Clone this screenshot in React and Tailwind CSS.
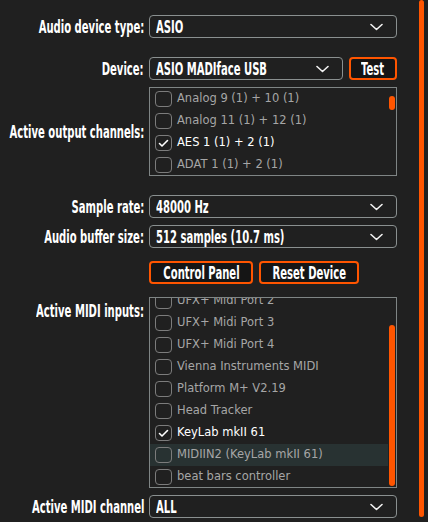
import { useState } from "react";

const LABEL_FONT = "font-['DejaVu_Sans_Condensed','DejaVu_Sans',sans-serif]";
const ITEM_FONT = "font-['DejaVu_Sans','Verdana',sans-serif]";

const outputChannels = [
  { name: "Analog 9 (1) + 10 (1)", on: false },
  { name: "Analog 11 (1) + 12 (1)", on: false },
  { name: "AES 1 (1) + 2 (1)", on: true },
  { name: "ADAT 1 (1) + 2 (1)", on: false },
];

const midiInputs = [
  { name: "UFX+ Midi Port 2", on: false },
  { name: "UFX+ Midi Port 3", on: false },
  { name: "UFX+ Midi Port 4", on: false },
  { name: "Vienna Instruments MIDI", on: false },
  { name: "Platform M+ V2.19", on: false },
  { name: "Head Tracker", on: false },
  { name: "KeyLab mkII 61", on: true },
  { name: "MIDIIN2 (KeyLab mkII 61)", on: false, hover: true },
  { name: "beat bars controller", on: false },
];

function Chevron() {
  return (
    <svg className="shrink-0" width="13" height="8" viewBox="0 0 13 8" fill="none">
      <path d="M1 1.5 L6.5 6.5 L12 1.5" stroke="#f2f2f2" strokeWidth="1.6" strokeLinecap="round" strokeLinejoin="round" />
    </svg>
  );
}

// narrow bold text, squeezed horizontally from one side
function Narrow({ children, origin = "origin-left" }) {
  return (
    <span className={`inline-block whitespace-nowrap text-white font-bold text-[18px] leading-none scale-x-[0.62] ${origin} ${LABEL_FONT}`}>
      {children}
    </span>
  );
}

function Label({ children, className = "" }) {
  return (
    <div className={`w-[149px] shrink-0 pr-[5px] flex justify-end ${className}`}>
      <Narrow origin="origin-right">{children}</Narrow>
    </div>
  );
}

function Combo({ value, className = "" }) {
  return (
    <div className={`h-[23px] flex items-center justify-between border border-[#8a9090] rounded-[4px] pl-[6px] pr-[13px] ${className}`}>
      <div className="min-w-0 flex-1 overflow-visible">
        <Narrow>{value}</Narrow>
      </div>
      <Chevron />
    </div>
  );
}

function OrangeButton({ children, className = "" }) {
  return (
    <button className={`h-[23px] flex items-center justify-center bg-[#151515] border-2 border-[#ff5500] rounded-[4px] ${className}`}>
      <Narrow origin="origin-center">{children}</Narrow>
    </button>
  );
}

function CheckRow({ item }) {
  return (
    <div className={`h-[22px] flex items-center pl-[5px] ${item.hover ? "bg-[#283232]" : ""}`}>
      <div className="w-[17px] h-[16px] shrink-0 border border-[#7c7c7c] rounded-[4px] flex items-center justify-center">
        {item.on && (
          <svg width="11" height="9" viewBox="0 0 11 9" fill="none">
            <path d="M1.5 4.5 L4 7 L9.5 1.5" stroke="#ffffff" strokeWidth="1.6" strokeLinecap="round" strokeLinejoin="round" />
          </svg>
        )}
      </div>
      <span className={`ml-[5px] whitespace-nowrap text-[11.5px] ${ITEM_FONT} ${item.on ? "text-white" : "text-[#a6a6a6]"}`}>
        {item.name}
      </span>
    </div>
  );
}

export default function App() {
  const [channel] = useState("ALL");

  return (
    <div className="w-[428px] h-[522px] bg-[#202020] flex overflow-hidden">
      <div className="w-[397px] pt-[15px] flex flex-col">
        <div className="flex items-center">
          <Label>Audio device type:</Label>
          <Combo value="ASIO" className="flex-1" />
        </div>

        <div className="flex items-center mt-[19px]">
          <Label>Device:</Label>
          <Combo value="ASIO MADIface USB" className="w-[194px]" />
          <OrangeButton className="ml-[6px] flex-1">Test</OrangeButton>
        </div>

        <div className="flex items-center mt-[7px]">
          <Label>Active output channels:</Label>
          <div className="flex-1 h-[89px] border border-[#7f8585] relative overflow-hidden">
            <div className="flex flex-col pr-[8px]">
              {outputChannels.map((c) => (
                <CheckRow key={c.name} item={c} />
              ))}
            </div>
            <div className="absolute right-[1px] top-[8px] w-[6px] h-[14px] rounded-full bg-[#ff5500]" />
          </div>
        </div>

        <div className="flex items-center mt-[19px]">
          <Label>Sample rate:</Label>
          <Combo value="48000 Hz" className="flex-1" />
        </div>

        <div className="flex items-center mt-[7px]">
          <Label>Audio buffer size:</Label>
          <Combo value="512 samples (10.7 ms)" className="flex-1" />
        </div>

        <div className="flex items-center mt-[13px] pl-[149px] gap-[6px]">
          <OrangeButton className="w-[104px]">Control Panel</OrangeButton>
          <OrangeButton className="w-[100px]">Reset Device</OrangeButton>
        </div>

        <div className="flex items-start mt-[13px]">
          <Label className="h-[27px] items-center">Active MIDI inputs:</Label>
          <div className="flex-1 h-[191px] border border-[#7f8585] relative overflow-hidden">
            <div className="flex flex-col -mt-[8px] pr-[8px]">
              {midiInputs.map((m) => (
                <CheckRow key={m.name} item={m} />
              ))}
            </div>
            <div className="absolute right-[1px] top-[27px] bottom-[1px] w-[6px] rounded-full bg-[#ff5500]" />
          </div>
        </div>

        <div className="flex items-center mt-[7px]">
          <Label>Active MIDI channel</Label>
          <Combo value={channel} className="flex-1" />
        </div>
      </div>

      <div className="ml-[22px] w-[5px] h-[517px] rounded-full bg-[#ff5500]" />
    </div>
  );
}
